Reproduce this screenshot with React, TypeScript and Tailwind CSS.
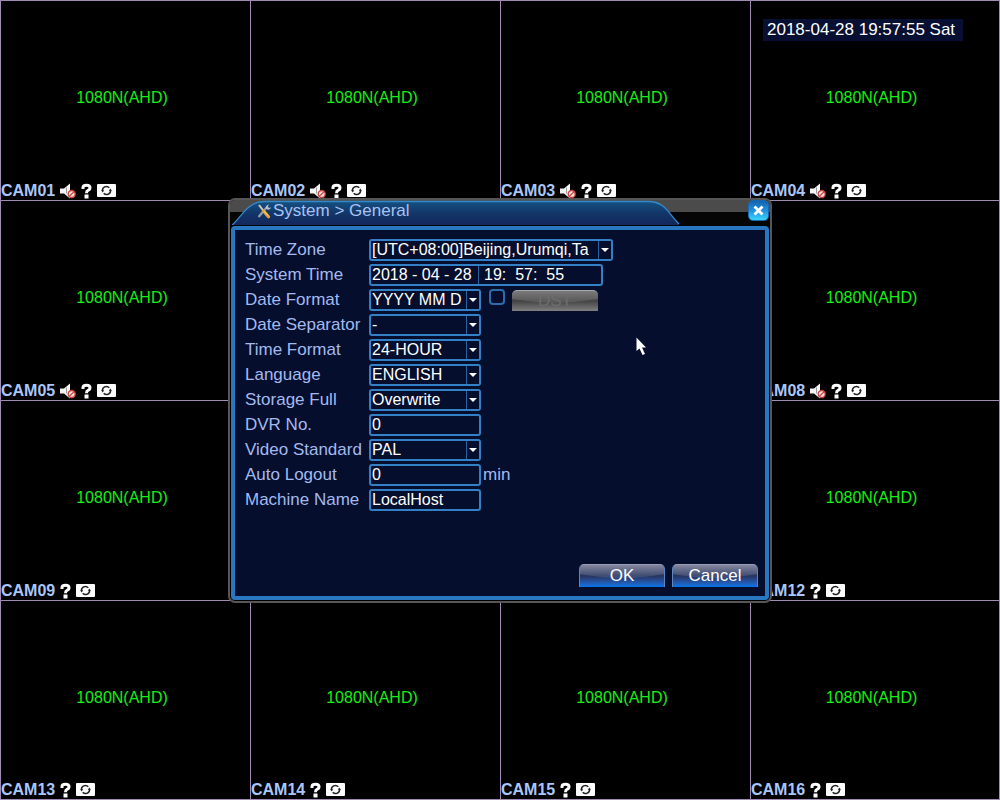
import type { ReactNode } from 'react';

const FONT = "font-['Liberation_Sans',Arial,sans-serif]";

function MuteIcon() {
  return (
    <svg className="h-4 w-4" viewBox="0 0 16 16" role="img" aria-label="Muted">
      <path d="M0 5.500h4l6-5v15l-6-5H0z" fill="#f4f4f4" />
      <path d="M6.500 4.500v6" stroke="#9a9a9a" strokeWidth="1" />
      <circle cx="11.700" cy="11" r="3.500" fill="#f6dede" stroke="#c8403c" strokeWidth="1.300" />
      <path d="M9.200 13.400l5-4.800" stroke="#c8403c" strokeWidth="1.300" />
    </svg>
  );
}

function UnknownIcon() {
  return (
    <svg className="h-4 w-[11px]" viewBox="0 0 11 16" role="img" aria-label="Unknown">
      <path d="M2 6V4.300Q2.300 2.300 5.500 2.300Q9 2.300 9 4.800Q9 6.600 7 7.400Q5.500 8 5.500 10.300" fill="none" stroke="#fff" strokeWidth="3" />
      <rect x="3.500" y="11.500" width="4" height="4" fill="#fff" />
    </svg>
  );
}

function SyncIcon() {
  return (
    <svg className="h-[13px] w-[19px]" viewBox="0 0 19 13" role="img" aria-label="Auto switch">
      <rect width="19" height="13" rx="1" fill="#fff" />
      <path d="M5.500 7.200A4 4 0 0 1 12.300 3.700M13.500 5.800A4 4 0 0 1 6.700 9.300" fill="none" stroke="#222" strokeWidth="1.500" />
      <path d="M4.200 6.200h3l-1.500 2.200zM14.800 6.800h-3l1.500-2.200z" fill="#222" />
    </svg>
  );
}

const COVERED = [6, 7, 10, 11];

function Camera({ index }: { index: number }) {
  const rightEdge = index % 4 === 0 ? 'border-r' : '';
  const bottomEdge = index > 12 ? 'border-b' : '';
  return (
    <section className={`relative flex flex-col border-t border-l border-[#a18bb5] ${rightEdge} ${bottomEdge}`}>
      {!COVERED.includes(index) && (
        <>
          <div className="flex flex-1 items-center justify-center pt-[14px] pr-[7px] text-base text-[#14f014]">1080N(AHD)</div>
          <div className="flex h-[19px] items-center gap-[5px]">
            <span className="text-base leading-[19px] font-bold text-[#a9c6fa]">CAM{String(index).padStart(2, '0')}</span>
            {index <= 8 && <MuteIcon />}
            <UnknownIcon />
            <SyncIcon />
          </div>
        </>
      )}
      {index === 4 && (
        <time className="absolute top-[18px] left-3 bg-[#071033] pr-2 pl-1 text-[17px] leading-[22px] text-white">
          2018-04-28 19:57:55 Sat
        </time>
      )}
    </section>
  );
}

const boxClass = 'h-[22px] rounded-[3px] border-2 border-[#3380c6] bg-[#050e2d] text-base text-white outline-none';

function Row({ id, label, children }: { id: string; label: string; children: ReactNode }) {
  return (
    <div className="flex h-[22px] items-center">
      <label htmlFor={id} className="w-[124px] shrink-0 text-[17px] leading-[22px] whitespace-nowrap text-[#a3baf0]">
        {label}
      </label>
      {children}
    </div>
  );
}

function Select({ id, value, wide = false }: { id: string; value: string; wide?: boolean }) {
  return (
    <div className={`relative h-[22px] ${wide ? 'w-[244px]' : 'w-[112px]'}`}>
      <select id={id} className={`${boxClass} block w-full appearance-none pr-[15px] pl-px leading-[18px]`}>
        <option>{value}</option>
      </select>
      <span className="pointer-events-none absolute top-[2px] right-[2px] flex h-[18px] w-[13px] items-start justify-center border-l border-[#2a62a0] bg-[#050e2d] pt-[7px]">
        <svg className="h-1 w-2" viewBox="0 0 8 4" aria-hidden="true">
          <path d="M0 0h8L4 4z" fill="#fff" />
        </svg>
      </span>
    </div>
  );
}

function TextBox({ id, value }: { id: string; value: string }) {
  return <input id={id} type="text" defaultValue={value} className={`${boxClass} w-[112px] pl-px`} />;
}

function GlossButton({ children }: { children: ReactNode }) {
  return (
    <button
      type="button"
      className="relative h-[23px] w-[86px] overflow-hidden rounded-t-[5px] border-x border-t border-x-[#5c86bd] border-t-[#9a9cb4] bg-linear-to-b from-[#747690] via-[#26335f] via-50% to-[#0075ea] text-[17px] leading-[21px] text-white"
    >
      <svg className="absolute inset-0 h-full w-full" viewBox="0 0 84 22" preserveAspectRatio="none" aria-hidden="true">
        <path d="M0 0h84v9Q42 17 0 9z" fill="#fff" opacity="0.12" />
      </svg>
      <span className="relative">{children}</span>
    </button>
  );
}

function ToolsIcon() {
  return (
    <svg className="h-4 w-4" viewBox="0 0 16 16" aria-hidden="true">
      <path d="M2.500 14L11 4" stroke="#8fa0b4" strokeWidth="2.200" />
      <path d="M10 5.500Q9.500 2 13 1.500L11.800 3.500L13 5l2-.8Q14.500 7 11.500 6.600z" fill="#b5c4d0" />
      <path d="M3 2l5 6.500" stroke="#d3cdb8" strokeWidth="2" />
      <path d="M7.500 8l5 5.800" stroke="#e6a236" strokeWidth="3.200" strokeLinecap="round" />
      <path d="M8 8l4 4.500" stroke="#ffd375" strokeWidth="1" />
    </svg>
  );
}

function TitleBar() {
  return (
    <header className="relative flex h-[26px] items-start justify-between bg-linear-to-b from-[#4b4b4b] from-45% to-[#050505] to-45% pr-px">
      <svg className="absolute top-0 left-[2px] h-[25px] w-[450px]" viewBox="0 0 450 25" aria-hidden="true">
        <defs>
          <linearGradient id="tab" x1="0" y1="0" x2="0" y2="1">
            <stop offset="0" stopColor="#155181" />
            <stop offset="0.500" stopColor="#133669" />
            <stop offset="1" stopColor="#13265b" />
          </linearGradient>
        </defs>
        <path d="M0 25C8 19 15 1.500 32 1.500H416C433 1.500 436 13 447 24V25z" fill="url(#tab)" />
        <path d="M0 25C8 19 15 1.500 32 1.500H416C433 1.500 436 13 447 24" fill="none" stroke="#3289c9" strokeWidth="1.300" />
      </svg>
      <h1 className="relative flex items-center pl-[26px] text-[17px] leading-[22px] text-[#a9c2f5]">
        <ToolsIcon />
        <span className="pl-px">System &gt; General</span>
      </h1>
      <button
        type="button"
        aria-label="Close"
        className="relative flex h-[21px] w-[21px] items-center justify-center rounded-[5px] border border-[#1768b5] bg-linear-to-b from-[#1562ad] via-[#2191dc] to-[#3cd5fb]"
      >
        <svg className="h-[11px] w-[11px]" viewBox="0 0 11 11" aria-hidden="true">
          <path d="M1.500 1.500l8 8M9.500 1.500l-8 8" stroke="#fff" strokeWidth="2.800" />
        </svg>
      </button>
    </header>
  );
}

function Pointer() {
  return (
    <svg className="pointer-events-none absolute top-[107px] left-[401px] h-5 w-3" viewBox="0 0 12 20" aria-hidden="true">
      <path d="M0.500 0.500V14l3-2.500L6.500 18l2.500-1-3-6.500H10z" fill="#fff" />
    </svg>
  );
}

export default function App() {
  return (
    <main className={`relative min-h-screen bg-black ${FONT}`}>
      <div className="grid min-h-screen grid-cols-4 grid-rows-4">
        {Array.from({ length: 16 }, (_, i) => (
          <Camera key={i} index={i + 1} />
        ))}
      </div>

      <div className="absolute inset-0 flex items-center justify-center">
        <div
          role="dialog"
          aria-label="System General"
          className="w-[544px] max-w-full overflow-hidden rounded-[7px] border-2 border-[#565656] bg-black pb-px"
        >
          <TitleBar />
          <form className="relative mx-px rounded-[4px] border-4 border-[#2877c0] bg-[#050e2d] pt-[9px] pr-[7px] pb-[9px] pl-[10px]">
            <div className="flex flex-col gap-[3px]">
              <Row id="zone" label="Time Zone">
                <Select id="zone" value="[UTC+08:00]Beijing,Urumqi,Ta" wide />
              </Row>
              <Row id="date" label="System Time">
                <div className={`${boxClass} flex w-[234px] items-center`}>
                  <input id="date" type="text" defaultValue="2018 - 04 - 28" className="h-[18px] w-[108px] border-r border-[#2a62a0] pl-px outline-none" />
                  <input type="text" aria-label="Time of day" defaultValue="19:  57:  55" className="h-[18px] w-[110px] pl-[5px] outline-none" />
                </div>
              </Row>
              <Row id="dateFormat" label="Date Format">
                <Select id="dateFormat" value="YYYY MM D" />
                <input
                  type="checkbox"
                  aria-label="Enable DST"
                  className="mb-[5px] ml-2 h-4 w-4 appearance-none rounded-[4px] border-2 border-[#2d6cab] bg-[#050e2d]"
                />
                <button
                  type="button"
                  disabled
                  className="relative mt-[2px] ml-[7px] h-[21px] w-[86px] overflow-hidden rounded-t-[5px] border-t border-[#a8a8a8] bg-linear-to-b from-[#686868] via-[#444444] via-50% to-[#808080] text-[17px] leading-5 text-[#6c6c6c]"
                >
                  <svg className="absolute inset-0 h-full w-full" viewBox="0 0 86 20" preserveAspectRatio="none" aria-hidden="true">
                    <path d="M0 0h86v8Q43 15 0 8z" fill="#fff" opacity="0.12" />
                  </svg>
                  <span className="relative">DST</span>
                </button>
              </Row>
              <Row id="separator" label="Date Separator">
                <Select id="separator" value="-" />
              </Row>
              <Row id="timeFormat" label="Time Format">
                <Select id="timeFormat" value="24-HOUR" />
              </Row>
              <Row id="language" label="Language">
                <Select id="language" value="ENGLISH" />
              </Row>
              <Row id="storage" label="Storage Full">
                <Select id="storage" value="Overwrite" />
              </Row>
              <Row id="dvr" label="DVR No.">
                <TextBox id="dvr" value="0" />
              </Row>
              <Row id="standard" label="Video Standard">
                <Select id="standard" value="PAL" />
              </Row>
              <Row id="logout" label="Auto Logout">
                <TextBox id="logout" value="0" />
                <span className="pl-[2px] text-[17px] leading-[22px] text-[#a3baf0]">min</span>
              </Row>
              <Row id="machine" label="Machine Name">
                <TextBox id="machine" value="LocalHost" />
              </Row>
            </div>
            <div className="mt-[53px] flex justify-end gap-[7px]">
              <GlossButton>OK</GlossButton>
              <GlossButton>Cancel</GlossButton>
            </div>
            <Pointer />
          </form>
        </div>
      </div>
    </main>
  );
}
